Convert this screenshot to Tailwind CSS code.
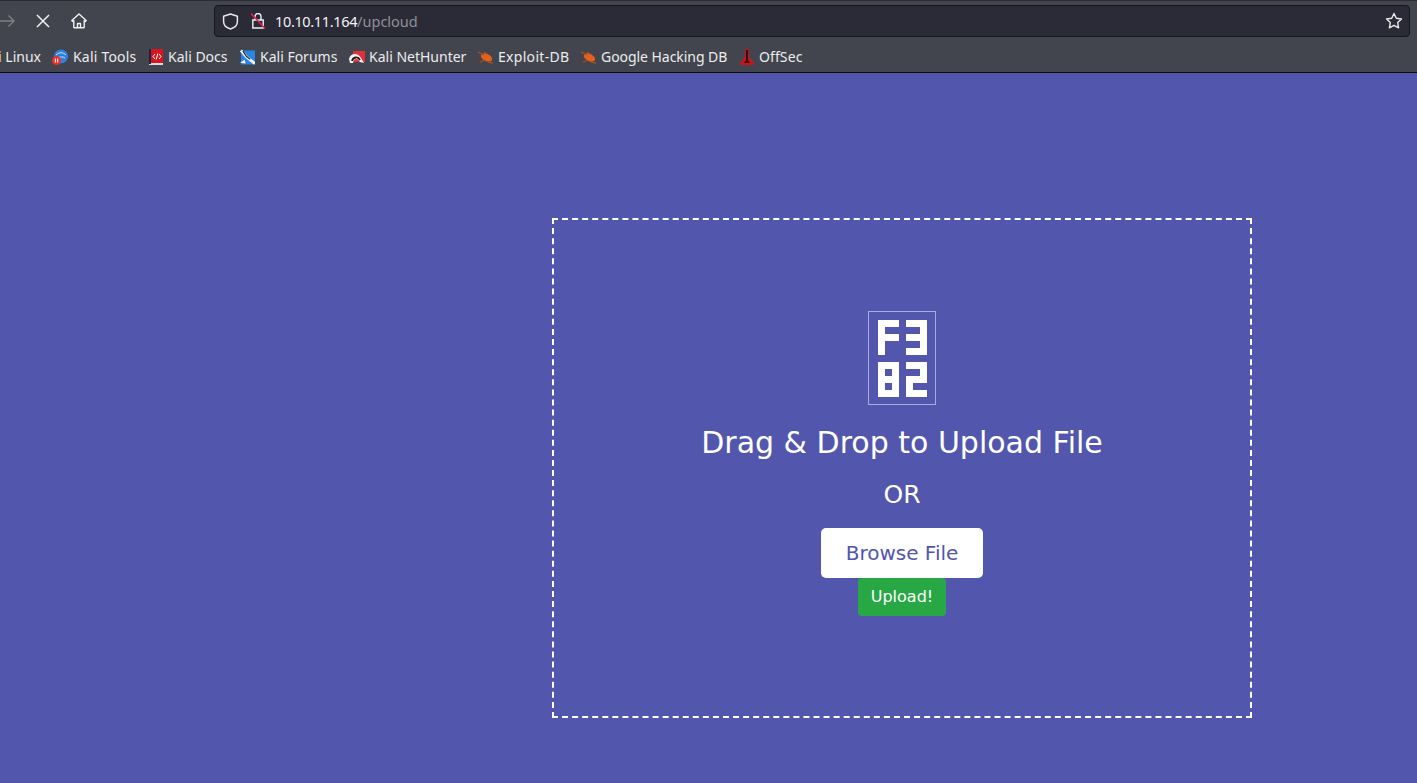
<!DOCTYPE html>
<html lang="en">
<head>
<meta charset="utf-8">
<title>upcloud</title>
<script src="https://cdn.jsdelivr.net/npm/@tailwindcss/browser@4"></script>
</head>
<body class="h-[783px] w-[1417px] overflow-hidden flex flex-col bg-[#5256ad] font-['DejaVu_Sans',sans-serif]">
<header class="h-[73px] shrink-0 bg-[#42454d] border-b border-[#0c0c0d] border-t border-t-[#2c2d33] overflow-hidden font-['Noto_Sans',sans-serif]">
  <div class="h-[40px] flex items-start pt-[4px]">
    <div class="w-[214px] h-[32px] shrink-0 flex items-center">
      <svg class="w-[16px] h-[16px] ml-[-1px] text-[#7d7f85]" viewBox="0 0 16 16" fill="none" stroke="currentColor" stroke-width="1.4"><path d="M0 8h15M9.500 2.500 15 8l-5.500 5.500"/></svg>
      <svg class="w-[14px] h-[14px] ml-[21px] text-[#f2f2f4]" viewBox="0 0 14 14" fill="none" stroke="currentColor" stroke-width="1.5"><path d="M1 1l12 12M13 1 1 13"/></svg>
      <svg class="w-[16px] h-[16px] ml-[21px] text-[#f2f2f4]" viewBox="0 0 16 16" fill="none" stroke="currentColor" stroke-width="1.400" stroke-linejoin="round"><path d="M.8 7.500 8 1l7.200 6.500-1 1-1-.8v6.300a.8.8 0 0 1-.8.8H3.600a.8.8 0 0 1-.8-.8V7.700l-1 .8zM6.500 15v-4.500h3V15"/></svg>
    </div>
    <div class="w-[1196px] h-[32px] shrink-0 flex items-center bg-[#2a2b37] border border-[#15161a] rounded-[4px]">
      <svg class="w-[17px] h-[17px] ml-[7px] text-[#e8e8ec]" viewBox="0 0 16 16" fill="none" stroke="currentColor" stroke-width="1.400" stroke-linejoin="round"><path d="M8 1 1.500 3v5c0 3.500 3 6 6.500 7 3.500-1 6.500-3.500 6.500-7V3z"/></svg>
      <svg class="w-[16px] h-[16px] ml-[11px]" viewBox="0 0 16 16" fill="none" stroke-width="1.400"><path d="M5 7V3.500a3 3 0 0 1 6 0V7M2.800 7h10.400v8H2.800z" stroke="#f0f0f3"/><path d="M1 .5 15 15.500" stroke="#e0234f" stroke-width="1.500"/></svg>
      <div class="ml-[9px] text-[14.500px] leading-none text-[#f4f4f6] tracking-[-0.35px]">10.10.11.164<span class="text-[#8e9097] tracking-[0px]">/upcloud</span></div>
      <svg class="w-[18px] h-[18px] ml-auto mr-[6px] text-[#e8e8ec]" viewBox="0 0 18 18" fill="none" stroke="currentColor" stroke-width="1.400" stroke-linejoin="round"><path d="M9 1.500l2.300 4.800 5.200.7-3.800 3.600.9 5.200L9 13.300l-4.600 2.500.9-5.200L1.500 7l5.200-.7z"/></svg>
    </div>
  </div>
  <nav class="h-[31px] flex items-center text-[14px] leading-none text-[#ececee] whitespace-nowrap">
    <span class="w-[41px] overflow-hidden flex justify-end shrink-0">Kali Linux</span>
    <span class="flex items-center ml-[11px] w-[84px] shrink-0 gap-[5px] tracking-[0.2px]">
      <svg class="w-[16px] h-[16px] shrink-0" viewBox="0 0 16 16"><circle cx="9" cy="7.500" r="7" fill="#2f7fdc"/><path d="M4 6c3-3 7-3 10 0M6 9c2-1.500 5-1.500 7 0" stroke="#cfe4fb" fill="none"/><circle cx="4.500" cy="11.500" r="4.500" fill="#e5322d"/><path d="M3.300 9.500v4M5.700 9.500v4" stroke="#fff"/></svg>Kali Tools</span>
    <span class="flex items-center ml-[12px] w-[80px] shrink-0 gap-[4px]">
      <svg class="w-[16px] h-[16px] shrink-0" viewBox="0 0 16 16"><rect x="3" width="12" height="14" fill="#d8141c"/><rect x="1" y="14" width="14" height="2" fill="#dcdcdc"/><rect x="1" width="2" height="15" fill="#1c2340"/><path d="M7 5 5 7.500 7 10M11 5l2 2.500L11 10M9.800 4.500l-1.600 6" stroke="#fff" fill="none"/></svg>Kali Docs</span>
    <span class="flex items-center ml-[12px] w-[97px] shrink-0 gap-[5px]">
      <svg class="w-[15px] h-[16px] shrink-0" viewBox="0 0 16 16"><path d="M1 1h15v15H1z" fill="#2b85e4"/><path d="M1 1l6 7 9 7" stroke="#f4f6f8" stroke-width="3" fill="none"/><path d="M0 14l5-3 1 4z" fill="#f4f6f8"/><path d="M3 1.500l4 6 4 3" stroke="#1c2330" stroke-width="1.200" fill="none"/></svg>Kali Forums</span>
    <span class="flex items-center ml-[12px] w-[117px] shrink-0 gap-[4px]">
      <svg class="w-[16px] h-[16px] shrink-0" viewBox="0 0 16 16"><path d="M4 2h12v11H4z" fill="#e0303a"/><path d="M0 10c1-6 9-7 12-1l3 5-4-1C9 9 5 9 4 14H1z" fill="#f4f4f4"/><path d="M3 12c1-4 6-5 8-1" stroke="#1d1d22" stroke-width="1.800" fill="none"/></svg>Kali NetHunter</span>
    <span class="flex items-center ml-[12px] w-[91px] shrink-0 gap-[4px] tracking-[0.3px]">
      <svg class="w-[16px] h-[16px] shrink-0" viewBox="0 0 16 16"><ellipse cx="8.500" cy="8.500" rx="6" ry="3.600" transform="rotate(25 8.500 8.500)" fill="#e4601c"/><path d="M0 3l6 3M2 13l5-2M10 13l5 1M6 3l3 2" stroke="#a8501f" stroke-width="1.300"/></svg>Exploit-DB</span>
    <span class="flex items-center ml-[12px] w-[146px] shrink-0 gap-[4px] tracking-[-0.05px]">
      <svg class="w-[16px] h-[16px] shrink-0" viewBox="0 0 16 16"><ellipse cx="8.500" cy="8.500" rx="6" ry="3.600" transform="rotate(25 8.500 8.500)" fill="#e4601c"/><path d="M0 3l6 3M2 13l5-2M10 13l5 1M6 3l3 2" stroke="#a8501f" stroke-width="1.300"/></svg>Google Hacking DB</span>
    <span class="flex items-center ml-[12px] shrink-0 gap-[4px] tracking-[0.1px]">
      <svg class="w-[16px] h-[16px] shrink-0" viewBox="0 0 16 16"><path d="M6 0h4v8l5 6v2H1v-2l5-6z" fill="#c9141c"/><path d="M7 1h2v10l2 3H5l2-3z" fill="#3a0c0f"/></svg>OffSec</span>
  </nav>
</header>
<main class="flex-1 pl-[552px] pt-[145px]">
  <section class="w-[700px] h-[500px] border-2 border-dashed border-white flex flex-col items-center pt-[91px] text-white">
    <div class="w-[68px] h-[94px] border border-[#a9abde]">
      <svg class="w-[66px] h-[92px] block" viewBox="0 0 66 92" fill="#fff">
        <rect x="9" y="8" width="21" height="7"/><rect x="9" y="8" width="7" height="35"/><rect x="9" y="22" width="21" height="7"/>
        <rect x="37" y="8" width="21" height="7"/><rect x="51" y="8" width="7" height="35"/><rect x="37" y="22" width="21" height="7"/><rect x="37" y="36" width="21" height="7"/>
        <path fill-rule="evenodd" d="M9 50h21v35H9zM16 57v7h7v-7zM16 71v7h7v-7z"/>
        <rect x="37" y="50" width="21" height="7"/><rect x="51" y="50" width="7" height="21"/><rect x="37" y="64" width="21" height="7"/><rect x="37" y="64" width="7" height="21"/><rect x="37" y="78" width="21" height="7"/>
      </svg>
    </div>
    <h1 class="mt-[19px] text-[30px] leading-[38px] font-normal whitespace-nowrap">Drag &amp; Drop to Upload File</h1>
    <p class="mt-[18px] text-[25px] leading-[29px]">OR</p>
    <button class="mt-[19px] w-[162px] h-[50px] bg-white rounded-[5px] text-[20px] font-medium text-[#5256ad]">Browse File</button>
    <button class="w-[88px] h-[38px] bg-[#28a745] rounded-[4px] text-[16px] text-white">Upload!</button>
  </section>
</main>
</body>
</html>
